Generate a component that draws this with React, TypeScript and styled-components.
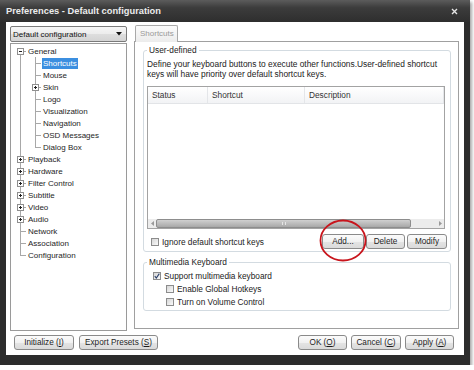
import styled, { createGlobalStyle } from "styled-components";

const GlobalStyle = createGlobalStyle`
  html, body {
    margin: 0;
    padding: 0;
    background: #ffffff;
  }
  body {
    font-family: "Liberation Sans", Arial, sans-serif;
    font-size: 8px;
    color: #1e1e1e;
  }
  * {
    box-sizing: border-box;
  }
`;

const Window = styled.div`
  width: 470px;
  height: 365px;
  background: #2c2c2c;
  display: flex;
  flex-direction: column;
  box-shadow: 2px 2px 3px rgba(0, 0, 0, 0.35);
`;

const TitleBar = styled.div`
  height: 22px;
  flex: none;
  display: flex;
  align-items: center;
  justify-content: space-between;
  padding: 0 12px 0 6px;
  background: linear-gradient(#5c5c5c 0%, #3c3c3c 35%, #2e2e2e 100%);
`;

const Title = styled.div`
  font-size: 9.3px;
  font-weight: bold;
  color: #ececec;
`;

const Client = styled.div`
  margin: 0 6px;
  height: 333px;
  background: #ffffff;
  padding: 3px 5px 5px 4px;
  display: flex;
  flex-direction: column;
`;

const Main = styled.div`
  height: 306px;
  display: flex;
  gap: 7px;
`;

const LeftColumn = styled.div`
  width: 117px;
  flex: none;
  display: flex;
  flex-direction: column;
  gap: 1px;
`;

const Combo = styled.div`
  margin-top: 1px;
  height: 16px;
  border: 1px solid #7a7a7a;
  border-radius: 2px;
  background: linear-gradient(#f6f6f6 0%, #ececec 50%, #dedede 51%, #d4d4d4 100%);
  display: flex;
  align-items: center;
  justify-content: space-between;
  padding: 0 4px 0 2px;
  color: #111;
`;

const Tree = styled.div`
  flex: 1;
  border: 1px solid #9a9a9a;
  background: #fff;
  padding-top: 1px;
`;

const TreeList = styled.ul<{ $nested?: boolean }>`
  list-style: none;
  margin: 0 0 0 ${(p) => (p.$nested ? 7 : 9)}px;
  padding: 0;
`;

const TreeNode = styled.li<{ $root?: boolean }>`
  position: relative;
  padding-left: 8px;

  &::before {
    content: "";
    position: absolute;
    left: 0;
    top: 0;
    bottom: 0;
    border-left: 1px solid #a8a8a8;
  }
  &:first-child::before {
    top: ${(p) => (p.$root ? 6 : 0)}px;
  }
  &:last-child::before {
    bottom: auto;
    height: 7px;
  }
  &::after {
    content: "";
    position: absolute;
    left: 0;
    top: 6px;
    width: 6px;
    border-top: 1px solid #a8a8a8;
  }
`;

const TreeRow = styled.div`
  height: 12px;
  display: flex;
  align-items: center;
`;

const TreeLabel = styled.span<{ $selected?: boolean }>`
  line-height: 11px;
  padding: 0 1px;
  margin-left: -1px;
  background: ${(p) => (p.$selected ? "#3c8fe0" : "transparent")};
  color: ${(p) => (p.$selected ? "#fff" : "#1e1e1e")};
`;

const ExpanderBox = styled.svg`
  position: absolute;
  left: -3px;
  top: 3px;
  z-index: 1;
`;

const RightColumn = styled.div`
  width: 325px;
  flex: none;
  display: flex;
  flex-direction: column;
`;

const TabStrip = styled.div`
  height: 17px;
  display: flex;
`;

const Tab = styled.div`
  margin-left: 1px;
  width: 43px;
  height: 17px;
  border: 1px solid #a9a9a9;
  border-bottom: none;
  border-radius: 2px 2px 0 0;
  background: linear-gradient(#fbfbfb, #ececec);
  color: #9a9a9a;
  padding: 3px 0 0 4px;
  position: relative;
  z-index: 1;
`;

const TabPanel = styled.div`
  margin-top: -1px;
  height: 288px;
  border: 1px solid #a0a0a0;
  background: #fff;
  padding: 3px 7px 0 8px;
  font-size: 8.3px;
`;

const Group = styled.fieldset<{ $pt: number }>`
  display: block;
  width: 100%;
  margin: 0 0 5px;
  min-width: 0;
  border: 1px solid #d3dbe1;
  border-radius: 3px;
  padding: ${(p) => p.$pt}px 5px 2px 3px;
`;

const Legend = styled.legend`
  padding: 0 2px;
  line-height: 10px;
  color: #222;
`;

const Description = styled.p`
  margin: 0;
  font-size: 8.4px;
  line-height: 10px;
  color: #222;
`;

const ListView = styled.div`
  margin-top: 7px;
  height: 143px;
  border: 1px solid #a3a3a3;
  background: #fff;
  display: flex;
  flex-direction: column;
`;

const ListHeader = styled.div`
  height: 17px;
  display: grid;
  grid-template-columns: 60px 97px 1fr;
  background: linear-gradient(#ffffff, #f2f3f5);
  border-bottom: 1px solid #e2e4e7;
`;

const HeaderCell = styled.div`
  padding-left: 4px;
  line-height: 16px;
  color: #333;
  border-right: 1px solid #e4e6e9;
`;

const ListBody = styled.div`
  flex: 1;
`;

const HScroll = styled.div`
  height: 9px;
  display: flex;
  align-items: stretch;
  background: #ececec;
`;

const ScrollArrow = styled.div`
  width: 8px;
  display: flex;
  align-items: center;
  justify-content: center;
`;

const Thumb = styled.div`
  width: 255px;
  border: 1px solid #8d8d8d;
  border-radius: 2px;
  background: linear-gradient(#d0d0d0, #a8a8a8);
  display: flex;
  align-items: center;
  justify-content: center;
`;

const Grip = styled.div`
  width: 4px;
  height: 3px;
  border-left: 1px solid #e6e6e6;
  border-right: 1px solid #e6e6e6;
`;

const ScrollTrack = styled.div`
  flex: 1;
`;

const ActionRow = styled.div`
  margin-top: 5px;
  height: 15px;
  display: flex;
  align-items: center;
`;

const CheckRow = styled.label<{ $indent: number }>`
  height: 13px;
  display: flex;
  align-items: center;
  gap: 3px;
  margin-left: ${(p) => p.$indent}px;
  color: #222;
`;

const CheckBox = styled.span`
  width: 8px;
  height: 8px;
  flex: none;
  border: 1px solid #8c8c8c;
  background: linear-gradient(135deg, #d6d6d6, #fafafa);
  display: flex;
  align-items: center;
  justify-content: center;
`;

const ButtonGroup = styled.div<{ $gap: number }>`
  display: flex;
  gap: ${(p) => p.$gap}px;
`;

const Button = styled.button<{ $w: number }>`
  width: ${(p) => p.$w}px;
  height: 15px;
  padding: 0;
  font-family: inherit;
  font-size: 8.2px;
  color: #1e1e1e;
  border: 1px solid #8a8a8a;
  border-radius: 3px;
  background: linear-gradient(#fbfbfb 0%, #f1f1f1 50%, #e4e4e4 51%, #dadada 100%);
`;

const AddWrap = styled.div`
  position: relative;
  margin-left: auto;
  margin-right: -2px;
`;

const Annotation = styled.svg`
  position: absolute;
  left: -4px;
  top: -15px;
  pointer-events: none;
  overflow: visible;
`;

const Footer = styled.div`
  margin-top: 4px;
  height: 15px;
  display: flex;
  justify-content: space-between;
  padding: 0 5px 0 4px;
`;

function Expander({ open }: { open: boolean }) {
  return (
    <ExpanderBox width="7" height="7" viewBox="0 0 7 7">
      <rect x="0.5" y="0.5" width="6" height="6" fill="#fff" stroke="#8f8f8f" />
      <line x1="2" y1="3.5" x2="5" y2="3.5" stroke="#222" />
      {!open && <line x1="3.5" y1="2" x2="3.5" y2="5" stroke="#222" />}
    </ExpanderBox>
  );
}

function Check({ checked }: { checked?: boolean }) {
  return (
    <CheckBox>
      {checked && (
        <svg width="6" height="6" viewBox="0 0 6 6">
          <path d="M0.8 3.2 L2.3 5 L5.3 0.6" fill="none" stroke="#2a3f6a" strokeWidth="1.1" />
        </svg>
      )}
    </CheckBox>
  );
}

type Node = { label: string; children?: Node[]; collapsed?: boolean; selected?: boolean };

const tree: Node[] = [
  {
    label: "General",
    children: [
      { label: "Shortcuts", selected: true },
      { label: "Mouse" },
      { label: "Skin", collapsed: true },
      { label: "Logo" },
      { label: "Visualization" },
      { label: "Navigation" },
      { label: "OSD Messages" },
      { label: "Dialog Box" },
    ],
  },
  { label: "Playback", collapsed: true },
  { label: "Hardware", collapsed: true },
  { label: "Filter Control", collapsed: true },
  { label: "Subtitle", collapsed: true },
  { label: "Video", collapsed: true },
  { label: "Audio", collapsed: true },
  { label: "Network" },
  { label: "Association" },
  { label: "Configuration" },
];

function TreeItems({ nodes, root }: { nodes: Node[]; root?: boolean }) {
  return (
    <TreeList $nested={!root}>
      {nodes.map((n) => (
        <TreeNode key={n.label} $root={root}>
          {(n.children || n.collapsed) && <Expander open={!!n.children} />}
          <TreeRow>
            <TreeLabel $selected={n.selected}>{n.label}</TreeLabel>
          </TreeRow>
          {n.children && <TreeItems nodes={n.children} />}
        </TreeNode>
      ))}
    </TreeList>
  );
}

function App() {
  return (
    <>
      <GlobalStyle />
      <Window>
        <TitleBar>
          <Title>Preferences - Default configuration</Title>
          <svg width="7" height="7" viewBox="0 0 7 7">
            <path d="M1 1 L6 6 M6 1 L1 6" stroke="#e6e6e6" strokeWidth="1.4" />
          </svg>
        </TitleBar>
        <Client>
          <Main>
            <LeftColumn>
              <Combo>
                <span>Default configuration</span>
                <svg width="6" height="4" viewBox="0 0 6 4">
                  <path d="M0 0 H6 L3 3.5 Z" fill="#111" />
                </svg>
              </Combo>
              <Tree>
                <TreeItems nodes={tree} root />
              </Tree>
            </LeftColumn>
            <RightColumn>
              <TabStrip>
                <Tab>Shortcuts</Tab>
              </TabStrip>
              <TabPanel>
                <Group $pt={4}>
                  <Legend>User-defined</Legend>
                  <Description>
                    Define your keyboard buttons to execute other functions.User-defined shortcut keys will have
                    priority over default shortcut keys.
                  </Description>
                  <ListView>
                    <ListHeader>
                      <HeaderCell>Status</HeaderCell>
                      <HeaderCell>Shortcut</HeaderCell>
                      <HeaderCell>Description</HeaderCell>
                    </ListHeader>
                    <ListBody />
                    <HScroll>
                      <ScrollArrow>
                        <svg width="3" height="5" viewBox="0 0 3 5">
                          <path d="M3 0 V5 L0 2.5 Z" fill="#9a9a9a" />
                        </svg>
                      </ScrollArrow>
                      <Thumb>
                        <Grip />
                      </Thumb>
                      <ScrollTrack />
                      <ScrollArrow>
                        <svg width="3" height="5" viewBox="0 0 3 5">
                          <path d="M0 0 V5 L3 2.5 Z" fill="#9a9a9a" />
                        </svg>
                      </ScrollArrow>
                    </HScroll>
                  </ListView>
                  <ActionRow>
                    <CheckRow $indent={4}>
                      <Check />
                      Ignore default shortcut keys
                    </CheckRow>
                    <AddWrap>
                      <ButtonGroup $gap={2}>
                        <Button $w={42}>Add...</Button>
                        <Button $w={39}>Delete</Button>
                        <Button $w={40}>Modify</Button>
                      </ButtonGroup>
                      <Annotation width="50" height="44" viewBox="0 0 50 44">
                        <ellipse cx="25" cy="21.5" rx="22.5" ry="20" fill="none" stroke="#c8141c" strokeWidth="1.8" />
                      </Annotation>
                    </AddWrap>
                  </ActionRow>
                </Group>
                <Group $pt={2}>
                  <Legend>Multimedia Keyboard</Legend>
                  <CheckRow $indent={6}>
                    <Check checked />
                    Support multimedia keyboard
                  </CheckRow>
                  <CheckRow $indent={19}>
                    <Check />
                    Enable Global Hotkeys
                  </CheckRow>
                  <CheckRow $indent={19}>
                    <Check />
                    Turn on Volume Control
                  </CheckRow>
                </Group>
              </TabPanel>
            </RightColumn>
          </Main>
          <Footer>
            <ButtonGroup $gap={5}>
              <Button $w={60}>
                Initialize (<u>I</u>)
              </Button>
              <Button $w={79}>
                Export Presets (<u>S</u>)
              </Button>
            </ButtonGroup>
            <ButtonGroup $gap={4}>
              <Button $w={49}>
                OK (<u>O</u>)
              </Button>
              <Button $w={50}>
                Cancel (<u>C</u>)
              </Button>
              <Button $w={49}>
                Apply (<u>A</u>)
              </Button>
            </ButtonGroup>
          </Footer>
        </Client>
      </Window>
    </>
  );
}

export default App;
